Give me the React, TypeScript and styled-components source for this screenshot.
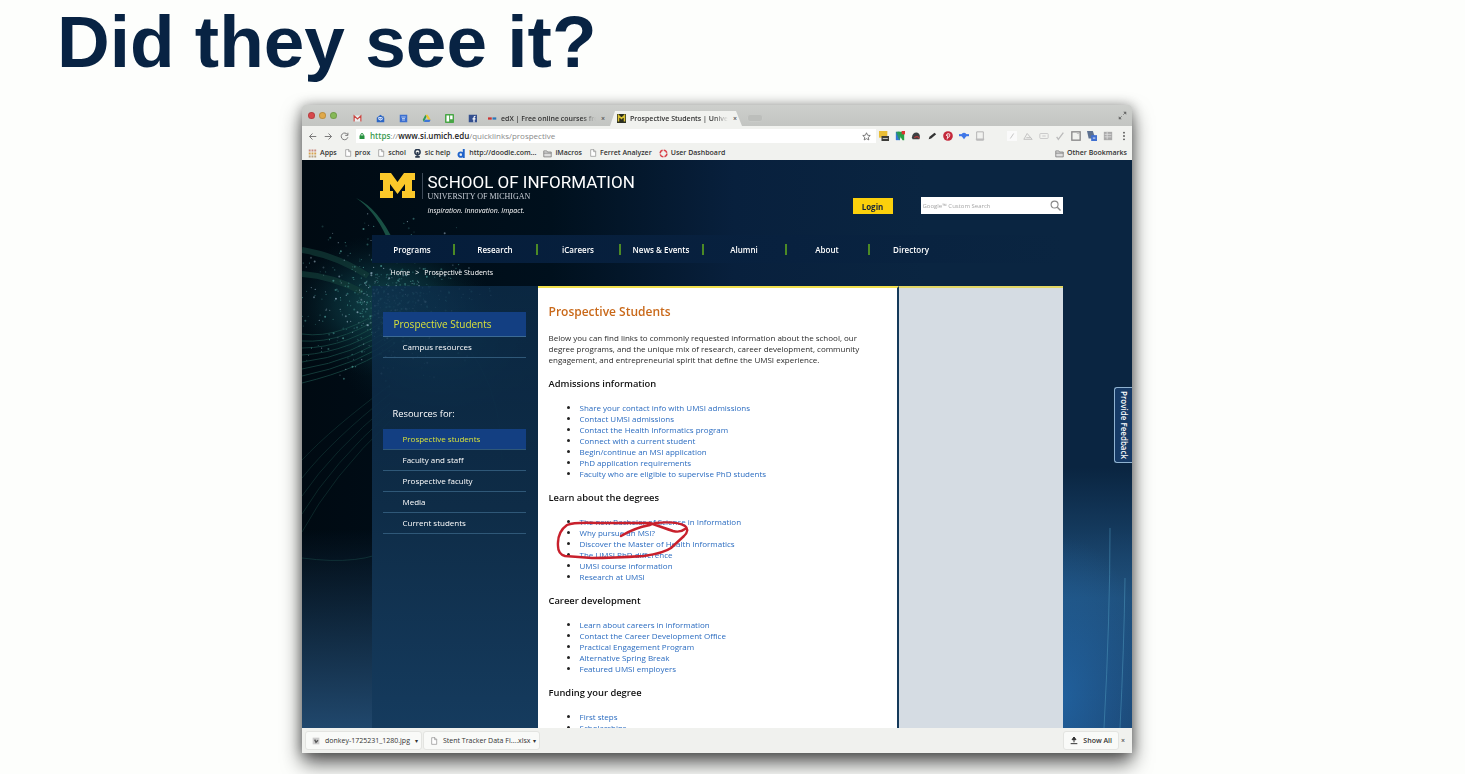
import React from 'react';
import styled, { createGlobalStyle } from 'styled-components';

const SANS = '"Open Sans", "Noto Sans", sans-serif';
const CHROME = '"Open Sans", "DejaVu Sans", sans-serif';

const GlobalStyle = createGlobalStyle`
  *, *::before, *::after { box-sizing: border-box; }
  body { margin: 0; background: #fdfefc; font-family: ${SANS}; }
  h1, h2, h3, p, ul { margin: 0; padding: 0; font-weight: inherit; }
  ul { list-style: none; }
  a { color: inherit; text-decoration: none; }
  button { border: 0; padding: 0; background: none; font: inherit; color: inherit; cursor: pointer; }
  svg { display: block; flex: none; }
`;

/* ---------- slide ---------- */

const Slide = styled.main`
  display: flex;
  flex-direction: column;
  height: 100vh;
  overflow: hidden;
`;

const SlideTitle = styled.h1`
  padding: 0 57px;
  margin-bottom: 21px;
  font: 700 73px/84px "Liberation Sans", Arial, sans-serif;
  color: #082343;
`;

const SlideBody = styled.div`
  flex: 1;
  display: flex;
  min-height: 0;
  padding: 0 333px 21px 302px;
`;

/* ---------- browser window ---------- */

const Browser = styled.section`
  flex: 1;
  display: flex;
  flex-direction: column;
  min-width: 0;
  border-radius: 3px 3px 0 0;
  background: #f1f2ef;
  font: 600 7px/10px ${CHROME};
  color: #333;
  box-shadow: 0 0 12px rgba(0, 0, 0, 0.3), 0 10px 20px rgba(0, 0, 0, 0.65);
`;

const TabStrip = styled.header`
  display: flex;
  align-items: flex-end;
  height: 21px;
  padding: 0 5px 0 6px;
  border-radius: 3px 3px 0 0;
  background: linear-gradient(#cdcfcc, #c3c5c2);
`;

const Lights = styled.div`
  display: flex;
  gap: 4px;
  align-self: center;
  width: 38px;
`;

const Light = styled.button<{ $tone: string }>`
  width: 7px;
  height: 7px;
  border-radius: 50%;
  border: 1px solid rgba(0, 0, 0, 0.15);
  background: ${(p) => p.$tone};
`;

const PinnedTab = styled.button`
  display: grid;
  place-items: center;
  width: 23px;
  height: 16px;
`;

const Tab = styled.div<{ $active?: boolean }>`
  position: relative;
  z-index: 0;
  display: flex;
  align-items: center;
  gap: 4px;
  width: ${(p) => (p.$active ? '132px' : '126px')};
  height: 15px;
  padding: 0 4px 0 ${(p) => (p.$active ? '7px' : '4px')};
  white-space: nowrap;
  &::before {
    content: '';
    position: absolute;
    z-index: -1;
    inset: 0;
    background: ${(p) => (p.$active ? '#f1f2ef' : 'transparent')};
    clip-path: polygon(5px 0, calc(100% - 6px) 0, 100% 100%, 0 100%);
  }
`;

const TabLabel = styled.span`
  flex: 1;
  overflow: hidden;
  mask-image: linear-gradient(90deg, #000 85%, transparent);
`;

const TabClose = styled.button`
  width: 6px;
  line-height: 8px;
  color: #555;
`;

const NewTab = styled.button`
  width: 16px;
  height: 8px;
  margin: 0 auto 4px 5px;
  border-radius: 3px;
  background: #bcbebb;
  border: 1px solid #c9cbc8;
`;

const Expand = styled.button`
  align-self: center;
`;

const Toolbar = styled.div`
  display: flex;
  align-items: center;
  height: 20px;
  padding-left: 2px;
`;

const ToolButton = styled.button`
  display: grid;
  place-items: center;
  width: 16px;
  height: 16px;
`;

const Address = styled.div`
  flex: 1;
  display: flex;
  align-items: center;
  gap: 5px;
  height: 14px;
  margin-left: 4px;
  padding: 0 5px 0 3px;
  background: #fff;
  font-size: 8px;
  font-weight: 400;
`;

const Url = styled.span`
  flex: 1;
  color: #8a8a8a;
`;

const UrlPart = styled.span<{ $tone: string; $strong?: boolean }>`
  color: ${(p) => p.$tone};
  font-weight: ${(p) => (p.$strong ? 600 : 400)};
`;

const Bookmarks = styled.nav`
  display: flex;
  align-items: center;
  gap: 7px;
  height: 14px;
  padding: 0 5px 0 6px;
`;

const Bookmark = styled.a<{ $last?: boolean }>`
  display: flex;
  align-items: center;
  gap: 3px;
  white-space: nowrap;
  margin-left: ${(p) => (p.$last ? 'auto' : '0')};
`;

const DownloadBar = styled.footer`
  display: flex;
  align-items: center;
  gap: 1px;
  height: 25px;
  padding: 0 6px 0 3px;
  background: #f0f1ee;
`;

const Download = styled.button<{ $last?: boolean }>`
  display: flex;
  align-items: center;
  gap: 5px;
  height: 19px;
  padding: 0 2px 0 6px;
  border-radius: 3px;
  border: 1px solid #e3e4e1;
  background: #f9faf8;
  margin-left: ${(p) => (p.$last ? 'auto' : '0')};
`;

const DownloadName = styled.span<{ $width?: number }>`
  width: ${(p) => (p.$width ? `${p.$width}px` : 'auto')};
  padding-right: ${(p) => (p.$width ? '0' : '4px')};
  font-weight: ${(p) => (p.$width ? 400 : 600)};
  text-align: left;
  white-space: nowrap;
`;

const Caret = styled.span`
  width: 5px;
  font-size: 6px;
`;

/* ---------- web page ---------- */

const Site = styled.div`
  position: relative;
  isolation: isolate;
  flex: 1;
  min-height: 0;
  overflow: hidden;
  display: flex;
  justify-content: center;
  background:
    linear-gradient(180deg, transparent 65%, rgba(38, 82, 124, 0.85) 100%),
    linear-gradient(90deg, #000a12 0, #00101d 30%, #08203d 52%, #0a2541 75%);
  font: 400 8px/11px ${SANS};
  color: #fff;
`;

const Backdrop = styled.svg`
  position: absolute;
  z-index: -1;
  top: 0;
  left: 0;
`;

const RightGlow = styled.div`
  position: absolute;
  z-index: -1;
  right: 0;
  bottom: 0;
  width: 100px;
  height: 260px;
  background:
    radial-gradient(ellipse 90px 160px at 30% 88%, rgba(34, 105, 172, 0.7), transparent),
    linear-gradient(180deg, transparent, #1f507c 50%, #1c4672);
`;

const Streaks = styled.svg`
  position: absolute;
  right: 0;
  bottom: 0;
`;

const Container = styled.div`
  flex: 0 1 691px;
  display: flex;
  flex-direction: column;
  min-width: 0;
`;

const Masthead = styled.header`
  display: flex;
  align-items: flex-start;
  height: 75px;
  padding: 13px 0 0 8px;
`;

const Brand = styled.a`
  display: flex;
  gap: 7px;
`;

const BrandText = styled.span`
  display: flex;
  flex-direction: column;
  padding-left: 6px;
  background: linear-gradient(#3d4a58, #3d4a58) 0 0 / 1px 26px no-repeat;
`;

const School = styled.span`
  font: 400 17px/19px "Roboto", sans-serif;
  white-space: nowrap;
`;

const University = styled.span`
  font: 400 8px/9px "Liberation Serif", serif;
  color: #c8ced6;
`;

const Tagline = styled.em`
  margin-top: 4px;
  font-size: 7px;
`;

const Login = styled.button`
  width: 40px;
  height: 16px;
  margin: 25px 28px 0 auto;
  background: #fbd00c;
  color: #14233c;
  font-weight: 700;
`;

const Search = styled.label`
  display: flex;
  align-items: center;
  width: 142px;
  height: 17px;
  margin-top: 24px;
  padding: 0 2px;
  background: #fff;
`;

const SearchInput = styled.input`
  flex: 1;
  min-width: 0;
  padding: 0;
  border: 0;
  outline: 0;
  background: none;
  font: 400 6px/10px ${SANS};
  &::placeholder { color: #a5a5a5; }
`;

const MainNav = styled.nav`
  display: flex;
  height: 28px;
  align-items: center;
  background: linear-gradient(90deg, #051d3a, #08213f 60%, #0a2541);
`;

const NavLink = styled.a<{ $last?: boolean }>`
  width: 83px;
  line-height: 11px;
  text-align: center;
  font-weight: 600;
  border-right: ${(p) => (p.$last ? '0' : '2px solid #4c8a25')};
`;

const Crumbs = styled.nav`
  display: flex;
  gap: 5px;
  height: 23px;
  padding: 4px 19px;
  font-size: 7px;
`;

const Columns = styled.div`
  flex: 1;
  display: flex;
  min-height: 0;
`;

const Sidebar = styled.aside`
  width: 166px;
  padding: 26px 12px 0 11px;
  background: linear-gradient(180deg, rgba(13, 46, 76, 0.78), #0e2c47 50%, #153b5e);
`;

const SideTitle = styled.h2`
  height: 25px;
  padding-left: 11px;
  font-size: 10px;
  line-height: 25px;
  color: #d8e23a;
  background: #133f82;
  border-bottom: 1px solid #3c6a94;
`;

const SideGroup = styled.h3`
  margin: 50px 0 10px;
  padding-left: 10px;
  line-height: 11px;
`;

const SideLink = styled.a<{ $active?: boolean }>`
  display: block;
  height: 21px;
  padding-left: 20px;
  line-height: 20px;
  color: ${(p) => (p.$active ? '#d8e23a' : '#fff')};
  background: ${(p) => (p.$active ? '#133f82' : 'none')};
  border-bottom: 1px solid #2f5878;
`;

const Content = styled.article`
  flex: 1;
  min-width: 0;
  padding: 17px 11px 0;
  background: #fff;
  border-top: 2px solid #f2e04c;
  border-right: 2px solid #14395a;
  color: #2b2b2b;
`;

const Rail = styled.aside`
  width: 164px;
  background: #d5dce3;
  border-top: 2px solid #e3d765;
`;

const PageTitle = styled.h2`
  margin-bottom: 13px;
  font-size: 12px;
  font-weight: 600;
  line-height: 14px;
  color: #c9691a;
`;

const Intro = styled.p`
  white-space: nowrap;
`;

const Section = styled.section`
  position: relative;
  padding-top: 13px;
`;

const SectionTitle = styled.h3`
  margin-bottom: 13px;
  font-weight: 600;
  color: #111;
`;

const LinkList = styled.ul`
  padding-left: 31px;
  list-style: disc;
  color: #222;
`;

const TextLink = styled.a`
  color: #2b6cc0;
`;

const Scribble = styled.svg`
  position: absolute;
  top: 41px;
  left: 3px;
`;

const Feedback = styled.button`
  position: absolute;
  right: 0;
  top: 227px;
  width: 18px;
  height: 76px;
  border: 1px solid #8fb2d0;
  border-right: 0;
  border-radius: 3px 0 0 3px;
  background: #163a66;
  writing-mode: vertical-rl;
  font-weight: 600;
  line-height: 16px;
`;

/* ---------- icons ---------- */

const Icon = ({ children, size = 9 }: { children: React.ReactNode; size?: number }) => (
  <svg width={size} height={size} viewBox="0 0 12 12" fill="none" aria-hidden="true">
    {children}
  </svg>
);

const PageIcon = () => (
  <Icon size={8}><path d="M2.500 1h5l2.500 2.500V11h-7.500zM7 1v3h3" stroke="#8b8b8b" fill="#fff" /></Icon>
);
const FolderIcon = () => (
  <Icon><path d="M1 2.500h4l1 1.500h5v6.500H1zM1 5.500h10" stroke="#777" fill="#ddd" /></Icon>
);

const pinned: [string, React.ReactNode][] = [
  ['Mail', <><rect x="1" y="2" width="10" height="8" fill="#eee" /><path d="M1.500 10V2.500L6 6.500l4.500-4V10" stroke="#c94540" strokeWidth="1.600" /></>],
  ['Inbox', <><path d="M1 5l5-4 5 4v6H1z" fill="#2c66c4" /><path d="M3 4h6v3L6 9 3 7z" fill="#dbe6fa" /><path d="M4 5l2 2 4-4" stroke="#1c53ae" /></>],
  ['Calendar', <><rect x="1" y="1" width="10" height="10" fill="#3b6fd0" /><path d="M3 4h6M4 6h4M4 8h4" stroke="#d9e4fa" /></>],
  ['Drive', <><path d="M4.500 1h3l4 6.500H8z" fill="#f1c52b" /><path d="M4.500 1L6 3.800 2.500 10.500 1 7.500z" fill="#2c9a57" /><path d="M2.500 10.500L4 7.500h7.500l-1.500 3z" fill="#3f76d6" /></>],
  ['Boards', <><rect width="12" height="12" rx="1" fill="#48a646" /><rect x="2" y="2" width="3.500" height="8" fill="#fff" /><rect x="6.800" y="2" width="3.300" height="5" fill="#fff" /></>],
  ['Social', <><rect x="1" y="1" width="11" height="10" fill="#334f8e" /><path d="M8 11V4.500Q8 3 10 3M6 6.500h4" stroke="#fff" strokeWidth="1.600" /></>],
];

const extensions: [string, React.ReactNode][] = [
  ['Notes', <><rect x="0" y="0" width="10" height="8" fill="#e9bd35" /><rect x="3" y="6" width="9" height="6" fill="#3c3c38" /><path d="M4.500 9h6" stroke="#ddd" /></>],
  ['Maps', <><path d="M1 1h5v10H1z" fill="#3576d8" /><path d="M3 1l6 10h2V1z" fill="#27a043" /><path d="M1 1h4l3 5-3 5z" fill="#27a043" opacity=".7" /><rect x="8" y="0" width="4" height="4" fill="#d33" /></>],
  ['Reader', <><path d="M1 8Q2 1 8 2q4 2 2 8H2z" fill="#3d4042" /><path d="M4 8q4-3 6 1" stroke="#b43b3b" strokeWidth="1.500" /></>],
  ['Highlighter', <path d="M2 10l1-3 6-5 2 2-6 5z" fill="#333" />],
  ['Pin it', <><circle cx="6" cy="6" r="5.800" fill="#c4283a" /><path d="M5 10l1-6M4 6q0-3 2.500-3T8 6 5.500 7" stroke="#fff" /></>],
  ['Share', <><path d="M3 5q0-3 3-3t3 3M3 6l3 4 3-4z" fill="#3f77e8" /><path d="M0 5h12" stroke="#3f77e8" strokeWidth="2.500" /></>],
  ['Document', <><path d="M2 1h8v10H2z" stroke="#aaa" /><path d="M1 9h10v2H1z" fill="#bbb" /></>],
  ['', null],
  ['Edit', <><rect width="12" height="12" fill="#fafafa" /><path d="M4 9l4-6" stroke="#bbb" /></>],
  ['Cloud', <><path d="M1 10l4-7 6 7zM4 8h5" stroke="#bbb" /></>],
  ['Cast', <><rect x="1" y="3" width="10" height="6" rx="1" stroke="#c3c3c3" /><path d="M4 6h4" stroke="#c3c3c3" /></>],
  ['Check', <path d="M2 7l2 3 6-8" stroke="#bbb" strokeWidth="1.600" />],
  ['Frame', <><rect x="1" y="1" width="10" height="10" stroke="#888" strokeWidth="1.600" /><path d="M7 3h3v3" stroke="#bbb" /></>],
  ['Translate', <><path d="M0 0h7l3 9H2z" fill="#5d7190" /><rect x="5" y="5" width="7" height="7" fill="#3f6fd0" /><path d="M7 8.500h3" stroke="#fff" /></>],
  ['Grid', <><rect x="1" y="1" width="10" height="10" fill="#aaa" /><path d="M2 4h8M2 7h8M5 1v9" stroke="#ddd" /></>],
  ['Menu', <><circle cx="6" cy="2" r="1.100" fill="#555" /><circle cx="6" cy="6" r="1.100" fill="#555" /><circle cx="6" cy="10" r="1.100" fill="#555" /></>],
];

const bookmarks: [string, React.ReactNode][] = [
  ['Apps', <Icon><path d="M1 2h10" stroke="#c98a80" strokeWidth="2.500" strokeDasharray="2.500 1.200" /><path d="M1 6h10" stroke="#d6a24f" strokeWidth="2.500" strokeDasharray="2.500 1.200" /><path d="M1 10h10" stroke="#b8a17f" strokeWidth="2.500" strokeDasharray="2.500 1.200" /></Icon>],
  ['prox', <PageIcon />],
  ['schol', <PageIcon />],
  ['sic help', <Icon><circle cx="6" cy="4" r="3.500" stroke="#29384e" strokeWidth="2" /><path d="M6 4v5M3 10.500h6" stroke="#29384e" strokeWidth="2.500" /></Icon>],
  ['http://doodle.com...', <Icon><circle cx="5" cy="7.500" r="3" stroke="#1f63c9" strokeWidth="2.600" /><path d="M9 0v12" stroke="#1f63c9" strokeWidth="2.600" /></Icon>],
  ['iMacros', <FolderIcon />],
  ['Ferret Analyzer', <PageIcon />],
  ['User Dashboard', <Icon><circle cx="6" cy="6" r="4.500" stroke="#d9434b" strokeWidth="2" strokeDasharray="5.500 1.500" /></Icon>],
];

const BlockM = () => (
  <svg width="35" height="25" viewBox="0 0 35 25" aria-hidden="true">
    <path d="M0 0h11l6.500 9L24 0h11v7h-3v11h3v7H22v-7h3v-7l-7.500 10L10 11v7h3v7H0v-7h3V7H0z" fill="#fbc82a" />
  </svg>
);

/* Fibre-optic artwork: strands fanning out of the left edge with scattered light points. */
const points = Array.from({ length: 620 }, (_, i) => {
  const a = i * 2.39996;
  const r = Math.sqrt(i) * 4.2 * (0.7 + 0.4 * Math.sin(i * 1.7));
  return { x: 86 + Math.cos(a) * r, y: 140 + Math.sin(a) * r * 0.8, o: 0.25 + ((i * 37) % 50) / 100 };
});

const FibreArt = () => (
  <Backdrop width="240" height="568" viewBox="0 0 240 568" aria-hidden="true">
    <defs>
      <radialGradient id="haze">
        <stop offset="0" stopColor="#1a5f63" stopOpacity=".75" />
        <stop offset=".5" stopColor="#0f4650" stopOpacity=".45" />
        <stop offset="1" stopColor="#06202c" stopOpacity="0" />
      </radialGradient>
    </defs>
    <ellipse cx="85" cy="146" rx="105" ry="72" fill="url(#haze)" />
    <ellipse cx="135" cy="190" rx="100" ry="75" fill="url(#haze)" opacity=".6" />
    <path d="M54 38Q76 48 92 82L84 76Q72 50 54 38z" fill="#195044" />
    <path d="M0 90Q36 96 66 116M0 114Q30 116 60 132" stroke="#123c38" strokeWidth="6" fill="none" opacity=".7" />
    <g stroke="#1f5a52" fill="none" opacity=".6">
      {[0, 1, 2, 3, 4, 5, 6, 7].map((i) => (
        <path key={i} d={`M0 ${174 + i * 7}Q${40 + i * 3} ${180 + i * 4} 92 ${142 + i * 6}`} />
      ))}
      {[0, 1, 2, 3, 4].map((i) => (
        <path key={i} d={`M0 ${300 + i * 18}Q30 ${268 + i * 12} 88 ${225 + i * 9}`} opacity=".6" />
      ))}
      <path d="M0 398Q60 406 90 388" opacity=".7" />
      <path d="M110 140Q200 190 200 300" opacity=".4" />
    </g>
    {points.map((p, i) => (
      <circle key={i} cx={p.x} cy={p.y} r={i % 4 ? 0.6 : 1} fill={i % 3 ? '#4f9f9a' : '#a9c4d6'} opacity={p.o} />
    ))}
  </Backdrop>
);

/* ---------- data ---------- */

const nav = ['Programs', 'Research', 'iCareers', 'News & Events', 'Alumni', 'About', 'Directory'];
const resources = ['Prospective students', 'Faculty and staff', 'Prospective faculty', 'Media', 'Current students'];

const sections = [
  {
    title: 'Admissions information',
    links: [
      'Share your contact info with UMSI admissions',
      'Contact UMSI admissions',
      'Contact the Health Informatics program',
      'Connect with a current student',
      'Begin/continue an MSI application',
      'PhD application requirements',
      'Faculty who are eligible to supervise PhD students',
    ],
  },
  {
    title: 'Learn about the degrees',
    circled: true,
    links: [
      'The new Bachelor of Science in Information',
      'Why pursue an MSI?',
      'Discover the Master of Health Informatics',
      'The UMSI PhD difference',
      'UMSI course information',
      'Research at UMSI',
    ],
  },
  {
    title: 'Career development',
    links: [
      'Learn about careers in information',
      'Contact the Career Development Office',
      'Practical Engagement Program',
      'Alternative Spring Break',
      'Featured UMSI employers',
    ],
  },
  { title: 'Funding your degree', links: ['First steps', 'Scholarships'] },
];

export default function App() {
  return (
    <>
      <GlobalStyle />
      <Slide>
        <SlideTitle>Did they see it?</SlideTitle>
        <SlideBody>
          <Browser>
            <TabStrip>
              <Lights>
                <Light $tone="#d8484c" aria-label="Close window" />
                <Light $tone="#e0a94a" aria-label="Minimize window" />
                <Light $tone="#86b957" aria-label="Zoom window" />
              </Lights>
              {pinned.map(([label, art]) => (
                <PinnedTab key={label} aria-label={label}><Icon>{art}</Icon></PinnedTab>
              ))}
              <Tab>
                <Icon><path d="M0 6h5" stroke="#c33" strokeWidth="3" /><path d="M6 6h5" stroke="#2b77b8" strokeWidth="3" /></Icon>
                <TabLabel>edX | Free online courses from</TabLabel>
                <TabClose aria-label="Close tab">×</TabClose>
              </Tab>
              <Tab $active>
                <Icon><rect width="12" height="12" fill="#2c2f22" /><path d="M2 10V2l4 4 4-4v8" stroke="#d9c234" strokeWidth="2" /></Icon>
                <TabLabel>Prospective Students | Univers</TabLabel>
                <TabClose aria-label="Close tab">×</TabClose>
              </Tab>
              <NewTab aria-label="New tab" />
              <Expand aria-label="Full screen">
                <Icon><path d="M7 5l3.500-3.500M5 7l-3.500 3.500" stroke="#666" /><path d="M7 1h4v4zM5 11H1V7z" fill="#666" /></Icon>
              </Expand>
            </TabStrip>

            <Toolbar>
              <ToolButton aria-label="Back"><Icon><path d="M11 6H2M6 2L2 6l4 4" stroke="#777" strokeWidth="1.300" /></Icon></ToolButton>
              <ToolButton aria-label="Forward"><Icon><path d="M1 6h9M6 2l4 4-4 4" stroke="#777" strokeWidth="1.300" /></Icon></ToolButton>
              <ToolButton aria-label="Reload"><Icon><path d="M10 3.500A4.500 4.500 0 1 0 10.500 7M10.500 1v3.500H7" stroke="#777" strokeWidth="1.300" /></Icon></ToolButton>
              <Address>
                <Icon size={6}><rect x="1" y="5" width="10" height="7" fill="#26923f" /><path d="M3.500 6V3.500a2.500 2.500 0 0 1 5 0V6" stroke="#26923f" strokeWidth="2" /></Icon>
                <Url>
                  <UrlPart $tone="#3a9a4f" $strong>https</UrlPart>://<UrlPart $tone="#222" $strong>www.si.umich.edu</UrlPart>/quicklinks/prospective
                </Url>
                <Icon><path d="M6 1l1.500 3.300 3.500.4-2.600 2.400.7 3.500L6 8.900l-3.100 1.700.7-3.500L1 4.700l3.500-.4z" stroke="#555" /></Icon>
              </Address>
              {extensions.map(([label, art], i) => (
                <ToolButton key={i} as={label ? 'button' : 'span'} aria-label={label || undefined}>
                  {art && <Icon size={10}>{art}</Icon>}
                </ToolButton>
              ))}
            </Toolbar>

            <Bookmarks aria-label="Bookmarks">
              {bookmarks.map(([label, art]) => (
                <Bookmark href="#" key={label}>{art}{label}</Bookmark>
              ))}
              <Bookmark href="#" $last><FolderIcon />Other Bookmarks</Bookmark>
            </Bookmarks>

            <Site>
              <FibreArt />
              <RightGlow>
                <Streaks width="60" height="200" viewBox="0 0 60 200" fill="none" aria-hidden="true">
                  <path d="M38 0Q38 90 32 200M53 50Q52 120 48 200" stroke="#4b93b8" opacity=".55" />
                </Streaks>
              </RightGlow>
              <Container>
                <Masthead>
                  <Brand href="#">
                    <BlockM />
                    <BrandText>
                      <School>SCHOOL OF INFORMATION</School>
                      <University>UNIVERSITY OF MICHIGAN</University>
                      <Tagline>Inspiration. Innovation. Impact.</Tagline>
                    </BrandText>
                  </Brand>
                  <Login>Login</Login>
                  <Search>
                    <SearchInput aria-label="Search" placeholder="Google™ Custom Search" />
                    <Icon size={11}><circle cx="5" cy="5" r="3.800" stroke="#888" strokeWidth="1.200" /><path d="M8 8l3.500 3.500" stroke="#888" strokeWidth="1.500" /></Icon>
                  </Search>
                </Masthead>
                <MainNav aria-label="Main">
                  {nav.map((n, i) => (
                    <NavLink href="#" key={n} $last={i === nav.length - 1}>{n}</NavLink>
                  ))}
                </MainNav>
                <Crumbs aria-label="Breadcrumb">
                  <a href="#">Home</a><span>&gt;</span><a href="#">Prospective Students</a>
                </Crumbs>
                <Columns>
                  <Sidebar>
                    <SideTitle>Prospective Students</SideTitle>
                    <SideLink href="#">Campus resources</SideLink>
                    <SideGroup>Resources for:</SideGroup>
                    {resources.map((r, i) => (
                      <SideLink href="#" key={r} $active={i === 0}>{r}</SideLink>
                    ))}
                  </Sidebar>
                  <Content>
                    <PageTitle>Prospective Students</PageTitle>
                    <Intro>
                      Below you can find links to commonly requested information about the school, our<br />
                      degree programs, and the unique mix of research, career development, community<br />
                      engagement, and entrepreneurial spirit that define the UMSI experience.
                    </Intro>
                    {sections.map((s) => (
                      <Section key={s.title}>
                        <SectionTitle>{s.title}</SectionTitle>
                        <LinkList>
                          {s.links.map((l) => (
                            <li key={l}><TextLink href="#">{l}</TextLink></li>
                          ))}
                        </LinkList>
                        {s.circled && (
                          <Scribble width="140" height="45" viewBox="0 0 140 45" fill="none" aria-hidden="true">
                            <path
                              d="M69 16Q82 8 98 5L103 3Q125 1 133 6Q138 10 132 16L119 28Q112 33 92 36Q60 38 40 38L13 36Q6 34 6 26Q5 12 15 5Q22 2 46 3L74 3L98 3Q112 8 121 11Q128 13 133 9"
                              stroke="#c8202c"
                              strokeWidth="2.400"
                              strokeLinecap="round"
                              strokeLinejoin="round"
                            />
                          </Scribble>
                        )}
                      </Section>
                    ))}
                  </Content>
                  <Rail />
                </Columns>
              </Container>
              <Feedback>Provide Feedback</Feedback>
            </Site>

            <DownloadBar>
              <Download>
                <Icon size={8}><rect x="1" y="1" width="10" height="10" fill="#ccc" /><path d="M4 4l2 4 3-3" stroke="#555" strokeWidth="2" /></Icon>
                <DownloadName $width={84}>donkey-1725231_1280.jpg</DownloadName>
                <Caret>▾</Caret>
              </Download>
              <Download>
                <PageIcon />
                <DownloadName $width={84}>Stent Tracker Data Fi....xlsx</DownloadName>
                <Caret>▾</Caret>
              </Download>
              <Download $last>
                <Icon size={8}><path d="M6 0v8M3 4l3-4 3 4zM1 10h10" stroke="#333" strokeWidth="1.500" fill="#333" /></Icon>
                <DownloadName>Show All</DownloadName>
              </Download>
              <TabClose aria-label="Close downloads bar">×</TabClose>
            </DownloadBar>
          </Browser>
        </SlideBody>
      </Slide>
    </>
  );
}
